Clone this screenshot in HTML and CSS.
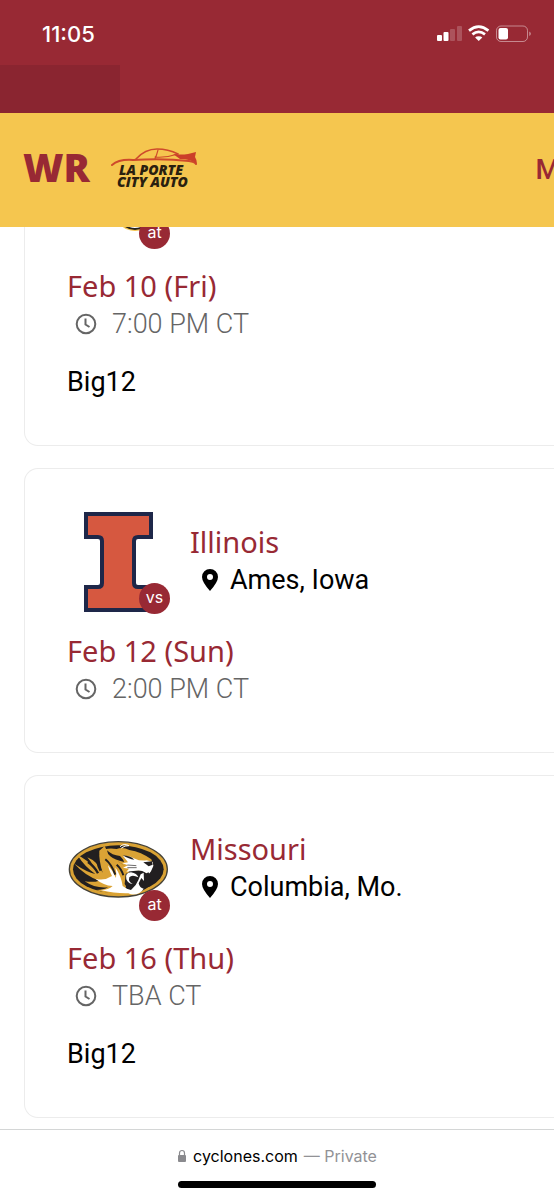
FILE: index.html
```html
<!DOCTYPE html>
<html lang="en">
<head>
<meta charset="utf-8">
<meta name="viewport" content="width=device-width, initial-scale=1">
<title>Cyclones Wrestling Schedule</title>
<link rel="stylesheet" href="styles.css">
</head>
<body>
<div class="screen">
  <div class="status">
    <time class="clock">11:05</time>
    <svg class="status-icons" viewBox="0 0 96 18" role="img" aria-label="Signal, Wi-Fi and battery">
      <g fill="#fff">
        <rect x="1" y="10" width="5" height="6" rx="1"/>
        <rect x="7.500" y="7" width="5" height="9" rx="1"/>
        <rect x="14" y="4" width="5" height="12" rx="1" opacity=".2"/>
        <rect x="21" y="1" width="5" height="15" rx="1" opacity=".2"/>
        <path d="M42.700 11.300q2.500 0 3.600 1.300l-3.600 3.500-3.600-3.500q1.100-1.300 3.600-1.300z"/>
      </g>
      <g fill="none" stroke="#fff" stroke-width="2.700">
        <path d="M33 5.600q9.700-8 19.400 0"/>
        <path d="M36.400 9.400q6.300-5 12.600 0"/>
      </g>
      <rect x="60.500" y="1" width="31" height="15.500" rx="4.500" fill="none" stroke="#fff" stroke-opacity=".45"/>
      <rect x="62.500" y="3" width="9.500" height="11.500" rx="2" fill="#fff"/>
      <path d="M93.300 6.500q3 2.200 0 4.500z" fill="#fff" opacity=".5"/>
    </svg>
  </div>
  <div class="topbar"><div class="tab"></div></div>
  <header class="sport">
    <h1 class="code">WR</h1>
    <svg class="sponsor" viewBox="0 0 90 46" role="img" aria-label="La Porte City Auto">
      <g fill="none" stroke="#ce4a2b" stroke-linecap="round">
        <path d="M1 18Q8 12 22 13Q52 11 78 14Q84 15 85 17" stroke-width="2"/>
        <path d="M25 12Q34 2 46 2Q57 2 67 7" stroke-width="1.600"/>
        <path d="M44 12Q46 7 47 3M44 10Q55 11 67 7" stroke-width="1.100"/>
      </g>
      <path d="M62 7q8 1 15 0l8-2-1 5q2 3 2 7-6-5-17-5z" fill="#cb3f29"/>
      <text x="8" y="28">LA PORTE</text>
      <text x="6" y="40">CITY AUTO</text>
    </svg>
    <button class="more" type="button">M</button>
  </header>

  <main class="schedule">
    <article class="card">
      <div class="match">
        <div class="logo">
          <svg viewBox="0 0 100 100" aria-hidden="true"><ellipse cx="67" cy="60" rx="22" ry="24" fill="#f5c64f"/><ellipse cx="67" cy="60" rx="19" ry="22" fill="#fff" stroke="#26221d" stroke-width="2"/></svg>
          <span class="badge">at</span>
        </div>
      </div>
      <h2 class="date">Feb 10 (Fri)</h2>
      <p class="time"><svg viewBox="0 0 22 22" aria-hidden="true"><circle cx="11" cy="11" r="9.300"/><path d="M10.500 5.500v6l4 2.500"/></svg>7:00 PM CT</p>
      <p class="league">Big12</p>
    </article>

    <article class="card">
      <div class="match">
        <div class="logo">
          <svg viewBox="0 0 100 100" role="img" aria-label="Illinois logo"><path d="M18 2H83V25H70Q66 25 66 29V71Q66 75 70 75H83V98H18V75H30Q34 75 34 71V29Q34 25 30 25H18Z" fill="#d65840" stroke="#1e2749" stroke-width="4"/></svg>
          <span class="badge">vs</span>
        </div>
        <div class="opponent">
          <h2 class="team">Illinois</h2>
          <p class="place"><svg viewBox="0 0 16 22" aria-hidden="true"><path fill-rule="evenodd" d="M8 0a8 8 0 0 1 8 8q0 5-8 14Q0 13 0 8a8 8 0 0 1 8-8m0 5a3 3 0 1 0 0 6 3 3 0 0 0 0-6"/></svg>Ames, Iowa</p>
        </div>
      </div>
      <h2 class="date">Feb 12 (Sun)</h2>
      <p class="time"><svg viewBox="0 0 22 22" aria-hidden="true"><circle cx="11" cy="11" r="9.300"/><path d="M10.500 5.500v6l4 2.500"/></svg>2:00 PM CT</p>
    </article>

    <article class="card">
      <div class="match">
        <div class="logo">
          <svg viewBox="24 -33 300 300" role="img" aria-label="Missouri logo">
            <ellipse cx="175" cy="118" rx="147" ry="83" fill="#d9a234" stroke="#454238" stroke-width="4"/>
            <ellipse cx="175" cy="118" rx="136" ry="72" fill="#221f20"/>
            <path d="M52 75Q82 88 102 116Q96 96 82 82Q112 94 128 128Q116 90 118 62L134 48Q142 68 160 82L208 120L196 178L236 190Q170 200 108 180Q132 180 144 172Q106 176 74 154Q100 158 118 152Q74 136 43 101Q80 126 106 132Q74 110 52 75Z" fill="#dba335"/>
            <path d="M114 72Q108 98 122 122M84 96Q104 110 114 130" fill="none" stroke="#221f20" stroke-width="7"/>
            <path d="M106 146Q132 154 156 138Q146 118 144 106Q160 124 168 144Q170 128 166 112Q184 140 188 168Q206 182 226 188Q180 194 122 180Q146 180 158 168Q130 166 106 146Z" fill="#fff"/>
            <path d="M136 88Q154 102 166 134M170 104Q184 116 190 136" fill="none" stroke="#221f20" stroke-width="6"/>
            <path d="M135 58Q150 53 170 57Q188 49 208 60Q244 66 274 88L280 106L270 126L262 132L248 120L200 122Q190 100 166 90Q142 80 135 58Z" fill="#dba335"/>
            <path d="M141 61Q156 76 180 78Q192 90 192 96Q164 90 151 79Q142 72 141 61Z" fill="#221f20"/>
            <path d="M189 77Q209 76 225 86Q240 94 260 91L278 96L280 108L273 124Q265 137 257 128Q244 119 227 122L199 125L207 116L189 113L204 106L187 100L204 97Z" fill="#fff"/>
            <path d="M188 76Q211 77 223 89Q207 88 188 76Z" fill="#221f20"/>
            <path d="M250 97L276 94L278 104L266 109Z" fill="#221f20"/>
            <path d="M202 105L229 107M202 113L230 113" stroke="#221f20" stroke-width="2"/>
            <path d="M197 132Q216 119 237 130Q252 136 266 127L271 149L262 173L242 185L206 181L194 162Z" fill="#221f20"/>
            <path d="M199 148Q194 128 213 127Q231 130 235 142Q216 133 208 142Q204 157 218 161Q206 163 199 148ZM242 133L251 128L252 153L244 144L236 160Q239 175 251 176Q240 196 212 193L194 183L200 176L213 180L227 165Q236 151 242 133Z" fill="#fff"/>
            <path d="M180 50Q191 39 207 47Q195 46 184 54" fill="none" stroke="#fff" stroke-width="3"/>
          </svg>
          <span class="badge">at</span>
        </div>
        <div class="opponent">
          <h2 class="team">Missouri</h2>
          <p class="place"><svg viewBox="0 0 16 22" aria-hidden="true"><path fill-rule="evenodd" d="M8 0a8 8 0 0 1 8 8q0 5-8 14Q0 13 0 8a8 8 0 0 1 8-8m0 5a3 3 0 1 0 0 6 3 3 0 0 0 0-6"/></svg>Columbia, Mo.</p>
        </div>
      </div>
      <h2 class="date">Feb 16 (Thu)</h2>
      <p class="time"><svg viewBox="0 0 22 22" aria-hidden="true"><circle cx="11" cy="11" r="9.300"/><path d="M10.500 5.500v6l4 2.500"/></svg>TBA CT</p>
      <p class="league">Big12</p>
    </article>
  </main>

  <footer class="browser">
    <div class="address">
      <svg viewBox="0 0 10 14" aria-hidden="true"><rect x="1" y="6" width="8" height="7" rx="1" fill="#8a8a8e"/><path d="M2.500 7V4a2.500 2.500 0 0 1 5 0v3" fill="none" stroke="#8a8a8e" stroke-width="1.200"/></svg>
      <span>cyclones.com</span><span class="private">— Private</span>
    </div>
    <div class="home"></div>
  </footer>
</div>
</body>
</html>
```
FILE: styles.css
```css
* { box-sizing: border-box; }
body { margin: 0; background: #fff; color: #000; font-family: Roboto, "Liberation Sans", sans-serif; }
h1, h2, p { margin: 0; }
.screen { display: flex; flex-direction: column; height: 100vh; overflow: hidden; }

.status { display: flex; align-items: center; justify-content: space-between; flex: none; height: 65px; padding: 2px 22px 0 42px; background: #982934; color: #fff; }
.clock { font: 500 22px/24px Inter, sans-serif; }
.status-icons { width: 96px; height: 18px; }
.topbar { display: flex; flex: none; height: 48px; background: #982934; }
.tab { width: 120px; background: #8a2530; }

.sport { display: flex; align-items: center; flex: none; height: 114px; padding-left: 23px; background: #f5c64f; color: #982934; overflow: hidden; }
.code { padding-bottom: 6px; font: 800 39px/48px "Open Sans", sans-serif; }
.sponsor { width: 90px; height: 46px; margin-left: 21px; }
.sponsor text { font: italic 800 14px "Open Sans", sans-serif; fill: #29200f; }
.more { flex: none; margin: 0 -6px 0 auto; padding: 0; border: 0; background: none; color: #982934; font: 500 28px/38px Roboto, sans-serif; }

.schedule { display: flex; flex: 1; flex-direction: column; justify-content: flex-end; gap: 22px; min-height: 0; padding: 0 0 11px 24px; overflow: hidden; }
.card { flex: none; padding: 43px 0 44px 42px; border: 1px solid #ececec; border-right: 0; border-radius: 14px 0 0 14px; font-size: 27px; line-height: 38px; }
.match { display: flex; align-items: center; gap: 22px; margin-bottom: 20px; padding-left: 1px; }
.opponent { padding-bottom: 2px; }
.logo { position: relative; width: 100px; height: 100px; }
.logo svg { display: block; width: 100%; height: 100%; }
.badge { position: absolute; right: -2px; bottom: -2px; width: 31px; height: 31px; border-radius: 50%; background: #982934; color: #fff; font: 16px/28px Inter, sans-serif; text-align: center; }
.team, .date { color: #982934; font: 400 29px/38px "Noto Sans", sans-serif; }
.place, .time { display: flex; align-items: center; }
.place svg { width: 16px; height: 22px; margin: 0 12px; }
.time { color: #656565; font-weight: 300; }
.time svg { width: 22px; height: 22px; margin: 0 15px 0 8px; fill: none; stroke: #656565; stroke-width: 2; }
.league { margin-top: 20px; }

.browser { display: flex; flex: none; flex-direction: column; align-items: center; justify-content: space-between; height: 70px; padding: 14px 0 11px; border-top: 1px solid #d4d6d6; background: #fff; }
.address { display: flex; align-items: center; gap: 6px; font: 16px/24px Inter, sans-serif; }
.address svg { width: 10px; height: 14px; }
.private { color: #929296; }
.home { width: 198px; height: 7px; border-radius: 4px; background: #000; }
```
